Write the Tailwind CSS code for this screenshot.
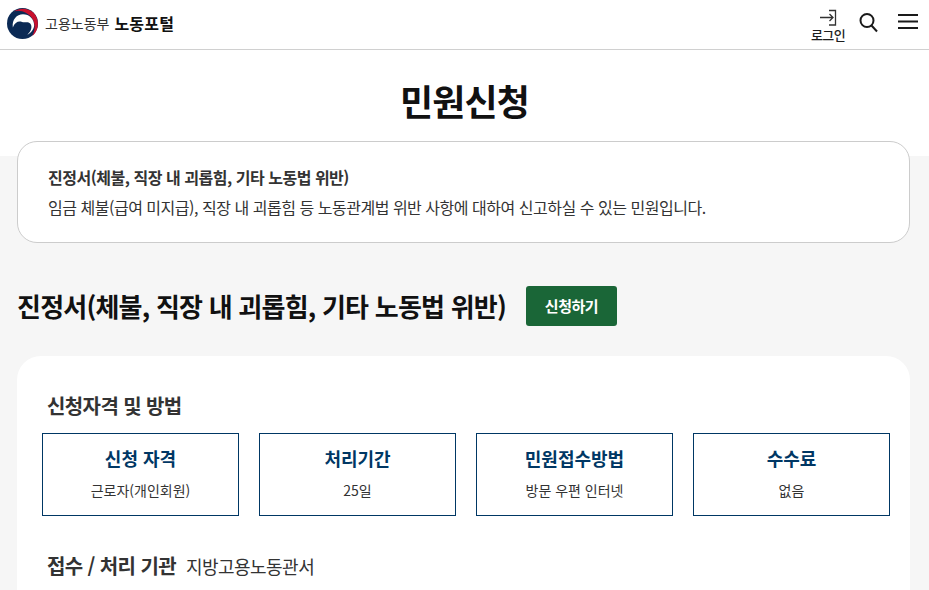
<!DOCTYPE html>
<html lang="ko">
<head>
  <meta charset="UTF-8">
  <meta name="viewport" content="width=device-width, initial-scale=1.0">
  <title>민원신청</title>
  <script src="https://cdn.jsdelivr.net/npm/@tailwindcss/browser@4"></script>
</head>
<body class="bg-[#f6f6f6] font-['Noto_Sans_CJK_KR',sans-serif] text-[#1e1e1e] h-[590px] overflow-hidden">
  <!-- Header -->
  <header class="h-[50px] bg-white border-b border-[#d0d0d0] flex items-start justify-between pl-[7px] pr-[11px]">
    <div class="flex items-center h-[46px]">
      <svg class="w-[31px] h-[31px]" viewBox="0 0 32 32">
        <circle cx="16" cy="16" r="16" fill="#0b2a55"/>
        <path d="M7 3.500C17 -3 31 2 31.800 15C32.200 21 30 26 26 29C29 23 29.500 17 26.500 11.500C22.500 5 14 1.500 7 3.500Z" fill="#c8102e"/>
        <path d="M6 20C5 12 10 6.500 16.500 6.500C23 6.500 28 11.500 28 18C27.800 22 25 25.500 21 27.500C25 24 26.500 19 24 16C21.500 13.500 18.500 15.500 15.500 14.500C12 13 8 15 6 20Z" fill="#fff"/>
      </svg>
      <span class="ml-[7px] text-[14px] text-[#333] leading-none">고용노동부</span>
      <span class="ml-[5px] text-[16px] font-bold text-[#111] leading-none tracking-[0.2px]">노동포털</span>
    </div>
    <div class="flex items-start">
      <a class="flex flex-col items-center pt-[7px] text-[13px] font-medium leading-[14px] tracking-[-0.6px]">
        <svg class="w-[20px] h-[20px]" viewBox="0 0 20 20" fill="none" stroke="#333" stroke-width="1.300">
          <path d="M2 10.500H15M11.500 7L15 10.500L11.500 14M11 3.500H17.500V18H11"/>
        </svg>
        <span class="mt-[1px]">로그인</span>
      </a>
      <svg class="w-[22px] h-[22px] ml-[13px] mt-[12px]" viewBox="0 0 22 22" fill="none" stroke="#1a1a1a" stroke-width="2">
        <circle cx="9" cy="8.500" r="6.500"/>
        <path d="M13.500 13.500L19 19.500"/>
      </svg>
      <svg class="w-[20px] h-[16px] ml-[18px] mt-[14px]" viewBox="0 0 20 16" fill="#1a1a1a">
        <rect y="0" width="20" height="2"/>
        <rect y="6.500" width="20" height="2"/>
        <rect y="13" width="20" height="2"/>
      </svg>
    </div>
  </header>

  <!-- Page title -->
  <section class="bg-white h-[106px] pt-[23px] text-center">
    <h1 class="text-[36px] font-bold leading-[54px] text-[#111] tracking-[-0.9px]">민원신청</h1>
  </section>

  <main class="px-[17px] w-[927px]">
    <!-- Intro -->
    <div class="-mt-[15px] relative h-[102px] bg-white border border-[#ccc] rounded-[20px] pl-[30px] pt-[23px]">
      <p class="text-[16px] font-bold leading-[24px] text-[#333] tracking-[-0.48px]">진정서(체불, 직장 내 괴롭힘, 기타 노동법 위반)</p>
      <p class="text-[16px] leading-[24px] mt-[6px] text-[#333] tracking-[-0.48px]">임금 체불(급여 미지급), 직장 내 괴롭힘 등 노동관계법 위반 사항에 대하여 신고하실 수 있는 민원입니다.</p>
    </div>

    <div class="flex items-center mt-[43px] h-[40px]">
      <h2 class="text-[26px] font-bold leading-[40px] text-[#111] tracking-[-0.78px]">진정서(체불, 직장 내 괴롭힘, 기타 노동법 위반)</h2>
      <button class="ml-[20px] w-[91px] h-[40px] bg-[#1a6637] rounded-[3px] text-white text-[15px] font-bold tracking-[-0.45px]">신청하기</button>
    </div>

    <!-- Details -->
    <div class="mt-[30px] bg-white rounded-[24px] pl-[25px] pr-[20px] pt-[35px] h-[300px]">
      <h3 class="pl-[5px] text-[20px] font-bold leading-[30px] text-[#333] tracking-[-0.6px]">신청자격 및 방법</h3>
      <div class="grid grid-cols-4 gap-[20px] mt-[12px]">
        <div class="h-[83px] border border-[#003764] text-center pt-[11px]">
          <p class="text-[18px] font-bold leading-[27px] text-[#003764]">신청 자격</p>
          <p class="text-[14px] leading-[21px] mt-[8px] text-[#333]">근로자(개인회원)</p>
        </div>
        <div class="h-[83px] border border-[#003764] text-center pt-[11px]">
          <p class="text-[18px] font-bold leading-[27px] text-[#003764]">처리기간</p>
          <p class="text-[14px] leading-[21px] mt-[8px] text-[#333]">25일</p>
        </div>
        <div class="h-[83px] border border-[#003764] text-center pt-[11px]">
          <p class="text-[18px] font-bold leading-[27px] text-[#003764]">민원접수방법</p>
          <p class="text-[14px] leading-[21px] mt-[8px] text-[#333]">방문 우편 인터넷</p>
        </div>
        <div class="h-[83px] border border-[#003764] text-center pt-[11px]">
          <p class="text-[18px] font-bold leading-[27px] text-[#003764]">수수료</p>
          <p class="text-[14px] leading-[21px] mt-[8px] text-[#333]">없음</p>
        </div>
      </div>
      <div class="pl-[5px] mt-[35px] flex items-baseline">
        <h3 class="text-[20px] font-bold leading-[30px] text-[#333] tracking-[-0.6px]">접수 / 처리 기관</h3>
        <span class="ml-[10px] text-[18px] text-[#333] tracking-[-0.54px]">지방고용노동관서</span>
      </div>
    </div>
  </main>
</body>
</html>
